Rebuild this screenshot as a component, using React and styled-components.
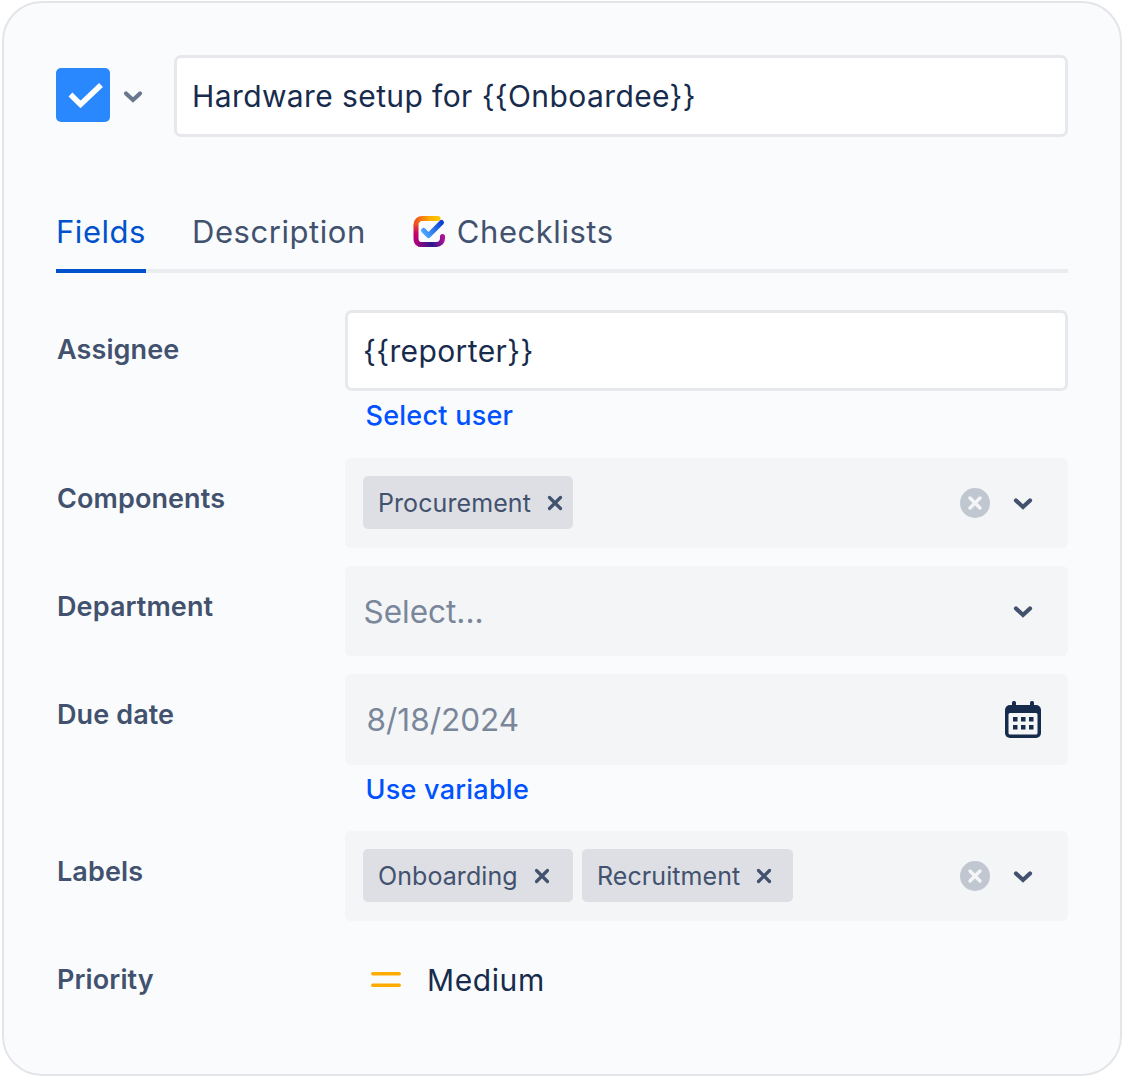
import React from "react";
import styled, { createGlobalStyle } from "styled-components";

const Global = createGlobalStyle`
  html, body { margin: 0; padding: 0; background: #fff; }
  body { font-family: Inter, "Noto Sans", sans-serif; }
  * { box-sizing: border-box; }
`;

const Card = styled.div`
  width: 1120px;
  height: 1075px;
  margin: 1px 0 0 2px;
  padding: 52px 52px 0 52px;
  background: #fafbfd;
  border: 2px solid #e3e5e9;
  border-radius: 40px;
`;

const Header = styled.div`
  display: flex;
  align-items: center;
  height: 82px;
`;

const TypeIcon = styled.div`
  width: 54px;
  height: 54px;
  margin-bottom: 2px;
  border-radius: 5px;
  background: #2a88ff;
  display: flex;
`;

const TypeChevron = styled.div`
  width: 64px;
  display: flex;
  justify-content: flex-start;
  padding-left: 8px;
`;

const TextInput = styled.div`
  flex: 1;
  height: ${p => p.$h || 82}px;
  display: flex;
  align-items: center;
  padding-left: 15px;
  background: #fff;
  border: 3px solid #e6e8ec;
  border-radius: 7px;
  color: #172b4d;
  font-size: 30px;
  letter-spacing: 0.4px;
`;

const Tabs = styled.div`
  display: flex;
  gap: 46px;
  margin-top: 66px;
  height: 70px;
  border-bottom: 4px solid #ebecf0;
`;

const Tab = styled.div`
  height: 70px;
  display: flex;
  align-items: center;
  gap: 11px;
  padding-bottom: 9px;
  font-size: 31px;
  letter-spacing: 0.55px;
  color: ${p => (p.$active ? "#0052cc" : "#42526e")};
  border-bottom: 4px solid ${p => (p.$active ? "#0052cc" : "transparent")};
`;

const LogoSlot = styled.span`
  display: flex;
  margin-left: 1px;
`;

const Form = styled.div`
  display: grid;
  grid-template-columns: 289px 1fr;
  margin-top: 37px;
`;

const Label = styled.div`
  font-size: 27px;
  font-weight: 600;
  letter-spacing: 0.1px;
  color: #42526e;
  line-height: 32px;
  padding-left: 1px;
  padding-top: ${p => p.$top}px;
  margin-top: ${p => p.$gap || 0}px;
`;

const Field = styled.div`
  margin-top: ${p => p.$gap || 0}px;
  min-width: 0;
`;

const Link = styled.div`
  color: #0052ff;
  font-size: 27px;
  font-weight: 500;
  letter-spacing: 0.25px;
  line-height: 32px;
  padding-left: 20.500px;
  margin-top: 9px;
  margin-bottom: ${p => p.$mb}px;
`;

const SelectBox = styled.div`
  height: ${p => p.$h || 90}px;
  background: #f4f5f7;
  border-radius: 6px;
  display: flex;
  align-items: center;
  padding: 0 ${p => p.$pr || 30}px 0 18px;
`;

const Tags = styled.div`
  display: flex;
  gap: 9px;
  flex: 1;
  margin-bottom: 1px;
`;

const Tag = styled.div`
  width: ${p => p.$w}px;
  height: 53px;
  display: flex;
  align-items: center;
  gap: 14px;
  padding-left: 15px;
  background: #dddfe4;
  border-radius: 5px;
  color: #42526e;
  font-size: 25px;
  letter-spacing: 0.08px;
`;

const Placeholder = styled.div`
  flex: 1;
  font-size: 31.500px;
  color: #7a869a;
  padding-left: ${p => p.$pl}px;
`;

const Actions = styled.div`
  display: flex;
  align-items: center;
  gap: 18px;
`;

const Static = styled.div`
  display: flex;
  align-items: center;
  gap: 26px;
  height: 32px;
  padding-left: 26px;
  margin-top: ${p => p.$gap}px;
  font-size: 30px;
  letter-spacing: 0.6px;
  color: #172b4d;
`;

const Chevron = ({ color = "#42526e", size = 30 }) => (
  <svg width={size} height={size} viewBox="0 0 30 30" fill="none">
    <path d="M8 12.500l7 6.500 7-6.500" stroke={color} strokeWidth="4.200" strokeLinecap="round" strokeLinejoin="miter" />
  </svg>
);

const Cross = () => (
  <svg width="20" height="20" viewBox="0 0 20 20" fill="none">
    <path d="M4.500 4.500l11 11M15.500 4.500l-11 11" stroke="#42526e" strokeWidth="3.200" strokeLinecap="round" />
  </svg>
);

const Clear = () => (
  <svg width="30" height="30" viewBox="0 0 30 30">
    <circle cx="15" cy="15" r="15" fill="#c1c7d0" />
    <path d="M10 10l10 10M20 10 10 20" stroke="#f4f5f7" strokeWidth="3.400" strokeLinecap="round" />
  </svg>
);

const Calendar = () => (
  <svg width="38" height="38" viewBox="0 0 38 38" fill="none">
    <rect x="1" y="4" width="36" height="33" rx="5" fill="#172b4d" />
    <rect x="4.500" y="12" width="29" height="21.500" rx="1.500" fill="#f4f5f7" />
    <rect x="8" y="0" width="4" height="8" rx="1.500" fill="#172b4d" />
    <rect x="26" y="0" width="4" height="8" rx="1.500" fill="#172b4d" />
    {[9, 17, 25].flatMap(x =>
      [16, 24].map(y => <rect key={x + "-" + y} x={x} y={y} width="4.500" height="4.500" fill="#172b4d" />)
    )}
  </svg>
);

const ChecklistLogo = () => (
  <svg width="33" height="33" viewBox="0 0 33 33" fill="none">
    <defs>
      <linearGradient id="lgTop" x1="0" y1="0" x2="1" y2="0">
        <stop offset="0" stopColor="#f0541e" />
        <stop offset="0.6" stopColor="#ffab00" />
        <stop offset="1" stopColor="#ffc400" />
      </linearGradient>
      <linearGradient id="lgLeft" x1="0" y1="0" x2="0" y2="1">
        <stop offset="0" stopColor="#ec4b22" />
        <stop offset="0.45" stopColor="#c4006e" />
        <stop offset="1" stopColor="#a8007e" />
      </linearGradient>
      <linearGradient id="lgBot" gradientUnits="userSpaceOnUse" x1="3" y1="30" x2="30" y2="22">
        <stop offset="0" stopColor="#a8007e" />
        <stop offset="0.55" stopColor="#2a1a8c" />
        <stop offset="1" stopColor="#b0109a" />
      </linearGradient>
      <linearGradient id="lgCheck" gradientUnits="userSpaceOnUse" x1="10" y1="18" x2="28" y2="6">
        <stop offset="0" stopColor="#4aa8ff" />
        <stop offset="1" stopColor="#0b3fd0" />
      </linearGradient>
    </defs>
    <path d="M25 3.500H9.500A6 6 0 0 0 3 9.500" stroke="url(#lgTop)" strokeWidth="5" strokeLinecap="round" />
    <path d="M3 9.500v14A6 6 0 0 0 7 29.500" stroke="url(#lgLeft)" strokeWidth="5" />
    <path d="M7 29.500h16.500a6 6 0 0 0 6-6v-2" stroke="url(#lgBot)" strokeWidth="5" strokeLinecap="round" />
    <path d="M10.500 15.500l5 5L28.500 7.500" stroke="url(#lgCheck)" strokeWidth="5" strokeLinecap="round" strokeLinejoin="round" />
  </svg>
);

export default function App() {
  return (
    <>
      <Global />
      <Card>
        <Header>
          <TypeIcon>
            <svg width="54" height="54" viewBox="0 0 54 54" fill="none">
              <path d="M14.500 26.500l10 10L45 17" stroke="#fff" strokeWidth="5.500" />
            </svg>
          </TypeIcon>
          <TypeChevron>
            <Chevron color="#6b778c" />
          </TypeChevron>
          <TextInput>Hardware setup for {"{{Onboardee}}"}</TextInput>
        </Header>
        <Tabs>
          <Tab $active>Fields</Tab>
          <Tab>Description</Tab>
          <Tab>
            <LogoSlot><ChecklistLogo /></LogoSlot>
            Checklists
          </Tab>
        </Tabs>
        <Form>
          <Label $top={24}>Assignee</Label>
          <Field>
            <TextInput $h={81}>{"{{reporter}}"}</TextInput>
            <Link $mb={8}>Select user</Link>
          </Field>

          <Label $gap={18} $top={25}>Components</Label>
          <Field $gap={18}>
            <SelectBox>
              <Tags>
                <Tag $w={210}>Procurement <Cross /></Tag>
              </Tags>
              <Actions>
                <Clear />
                <Chevron />
              </Actions>
            </SelectBox>
          </Field>

          <Label $gap={18} $top={25}>Department</Label>
          <Field $gap={18}>
            <SelectBox>
              <Placeholder $pl={0.5}>Select...</Placeholder>
              <Chevron />
            </SelectBox>
          </Field>

          <Label $gap={18} $top={25}>Due date</Label>
          <Field $gap={18}>
            <SelectBox $h={91} $pr={26}>
              <Placeholder $pl={3.5}>8/18/2024</Placeholder>
              <Calendar />
            </SelectBox>
            <Link $mb={7}>Use variable</Link>
          </Field>

          <Label $gap={18} $top={25}>Labels</Label>
          <Field $gap={18}>
            <SelectBox>
              <Tags>
                <Tag $w={210}>Onboarding <Cross /></Tag>
                <Tag $w={211}>Recruitment <Cross /></Tag>
              </Tags>
              <Actions>
                <Clear />
                <Chevron />
              </Actions>
            </SelectBox>
          </Field>

          <Label $gap={43} $top={0}>Priority</Label>
          <Static $gap={43}>
            <svg width="30" height="16" viewBox="0 0 30 16">
              <rect x="0" y="0" width="30" height="3.500" rx="1.700" fill="#ffab00" />
              <rect x="0" y="11.500" width="30" height="3.500" rx="1.700" fill="#ffab00" />
            </svg>
            Medium
          </Static>
        </Form>
      </Card>
    </>
  );
}
